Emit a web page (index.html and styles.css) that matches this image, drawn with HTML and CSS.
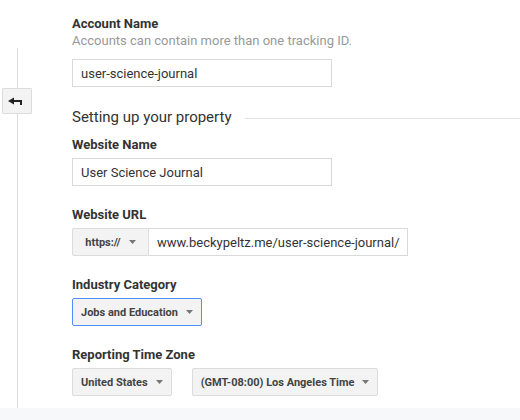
FILE: index.html
```html
<!DOCTYPE html>
<html>
<head>
<meta charset="utf-8">
<link rel="stylesheet" href="styles.css">
</head>
<body>
<div class="page">
  <div class="main">
    <div class="gutter">
      <div class="rail rail-top"></div>
      <div class="back">
        <svg width="14" height="8" viewBox="0 0 14 8"><polygon points="0,4 6,0.5 6,7.5" fill="#222"/><rect x="5" y="3" width="9" height="2" fill="#222"/><rect x="12" y="3" width="2" height="5" fill="#222"/></svg>
      </div>
      <div class="rail rail-bottom"></div>
    </div>
    <div class="form">
      <div class="label">Account Name</div>
      <div class="hint">Accounts can contain more than one tracking ID.</div>
      <div class="input input-name">user-science-journal</div>

      <div class="section">
        <span class="section-title">Setting up your property</span>
        <div class="rule"></div>
      </div>

      <div class="label label-first">Website Name</div>
      <div class="input input-name">User Science Journal</div>

      <div class="label">Website URL</div>
      <div class="url-row">
        <div class="select protocol">https:// <svg class="caret" width="7" height="4" viewBox="0 0 7 4"><polygon points="0,0 7,0 3.5,4" fill="#777"/></svg></div>
        <div class="input input-url">www.beckypeltz.me/user-science-journal/</div>
      </div>

      <div class="label">Industry Category</div>
      <div class="select focused">Jobs and Education <svg class="caret" width="7" height="4" viewBox="0 0 7 4"><polygon points="0,0 7,0 3.5,4" fill="#777"/></svg></div>

      <div class="label">Reporting Time Zone</div>
      <div class="tz-row">
        <div class="select">United States <svg class="caret" width="7" height="4" viewBox="0 0 7 4"><polygon points="0,0 7,0 3.5,4" fill="#777"/></svg></div>
        <div class="select">(GMT-08:00) Los Angeles Time <svg class="caret" width="7" height="4" viewBox="0 0 7 4"><polygon points="0,0 7,0 3.5,4" fill="#777"/></svg></div>
      </div>
    </div>
  </div>
  <div class="footer"></div>
</div>
</body>
</html>
```

FILE: styles.css
```css
* { box-sizing: border-box; }
html, body { margin: 0; padding: 0; background: #fff; }
body { font-family: Roboto, "Liberation Sans", Arial, sans-serif; color: #333; }
.page { width: 520px; height: 420px; display: flex; flex-direction: column; overflow: hidden; }
.main { flex: 1; display: flex; }
.gutter { width: 72px; flex: none; display: flex; flex-direction: column; align-items: flex-start; padding-top: 48px; }
.rail { width: 1px; background: #dcdcdc; margin-left: 17px; }
.rail-top { height: 40px; }
.rail-bottom { flex: 1; }
.back { width: 30px; height: 26px; margin-left: 2px; border: 1px solid #dcdcdc; background: #f3f3f3; border-radius: 1px; display: flex; align-items: center; padding-left: 5px; }
.back svg { display: block; }
.form { flex: 1; display: flex; flex-direction: column; align-items: flex-start; padding-top: 16px; }
.label { font-size: 13px; font-weight: 700; line-height: 16px; color: #333; margin-top: 21px; margin-bottom: 5px; }
.form > .label:first-child { margin-top: 0; margin-bottom: 1px; }
.label-first { margin-top: 11px; }
.hint { font-size: 13px; line-height: 16px; color: #999; margin-bottom: 10px; }
.input { height: 28px; border: 1px solid #d9d9d9; background: #fff; padding: 0 8px; font-size: 13px; color: #333; display: flex; align-items: center; white-space: nowrap; }
.input-name { width: 260px; }
.section { align-self: stretch; display: flex; align-items: center; margin-top: 21px; height: 18px; }
.section-title { font-size: 15px; line-height: 18px; color: #333; white-space: nowrap; }
.rule { flex: 1; height: 1px; background: #e0e0e0; margin-left: 13px; margin-top: 2px; }
.url-row { display: flex; }
.select { height: 28px; border: 1px solid #dcdcdc; background: #f3f3f3; border-radius: 2px; padding: 0 8px; display: flex; align-items: center; gap: 8px; font-size: 11px; font-weight: 700; color: #444; white-space: nowrap; }
.select .caret { display: block; flex: none; }
.protocol { width: 77px; justify-content: center; padding: 0; border-radius: 2px 0 0 2px; }
.input-url { width: 259px; border-left: none; padding-left: 8px; }
.focused { border-color: #4d90fe; }
.tz-row { display: flex; gap: 20px; }
.footer { height: 12px; background: #f7f8fa; flex: none; }
```
